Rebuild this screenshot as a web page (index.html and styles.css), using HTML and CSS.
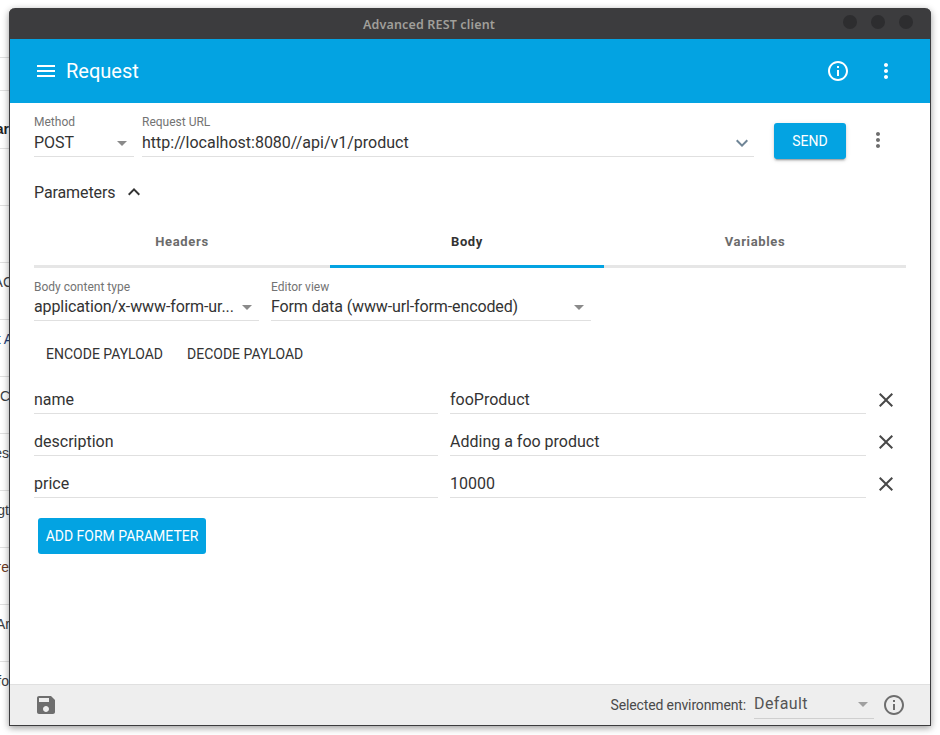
FILE: index.html
```html
<!DOCTYPE html>
<html lang="en">
<head>
<meta charset="utf-8">
<title>Advanced REST client</title>
<link rel="stylesheet" href="styles.css">
</head>
<body>
<div class="backdrop">
  <div class="bg-row bg-first"></div>
  <div class="bg-row bold">Bar</div>
  <div class="bg-row"></div>
  <div class="bg-row"></div>
  <div class="bg-row wide">AC</div>
  <div class="bg-row link wide">Get A</div>
  <div class="bg-row wide">C</div>
  <div class="bg-row">Ces</div>
  <div class="bg-row">Lengt</div>
  <div class="bg-row rust">Pre</div>
  <div class="bg-row wide-1">Ar</div>
  <div class="bg-row">Ifo</div>
</div>
<main class="window">
  <div class="titlebar">
    <span class="title">Advanced REST client</span>
    <div class="win-dots"><i></i><i></i><i></i></div>
  </div>
  <header class="appbar">
    <svg class="icon white menu-icon" viewBox="0 0 24 24"><path d="M3 18h18v-2H3v2zm0-5h18v-2H3v2zm0-7v2h18V6H3z"/></svg>
    <h1 class="appbar-title">Request</h1>
    <svg class="icon white info-icon" viewBox="0 0 24 24"><path d="M11 7h2v2h-2zm0 4h2v6h-2zm1-9C6.48 2 2 6.48 2 12s4.48 10 10 10 10-4.48 10-10S17.520 2 12 2zm0 18c-4.410 0-8-3.590-8-8s3.590-8 8-8 8 3.590 8 8-3.590 8-8 8z"/></svg>
    <svg class="icon white more-icon" viewBox="0 0 24 24"><path d="M12 8c1.100 0 2-.9 2-2s-.9-2-2-2-2 .9-2 2 .9 2 2 2zm0 2c-1.100 0-2 .9-2 2s.9 2 2 2 2-.9 2-2-.9-2-2-2zm0 6c-1.100 0-2 .9-2 2s.9 2 2 2 2-.9 2-2-.9-2-2-2z"/></svg>
  </header>
  <section class="content">
    <div class="url-row">
      <div class="field method">
        <label class="label">Method</label>
        <div class="value">POST<span class="caret"></span></div>
      </div>
      <div class="field url">
        <label class="label">Request URL</label>
        <div class="value">http://localhost:8080//api/v1/product
          <svg class="icon chevron" viewBox="0 0 24 24"><path d="M7.410 8.590L12 13.170l4.590-4.580L18 10l-6 6-6-6 1.410-1.410z"/></svg>
        </div>
      </div>
      <button class="btn send">SEND</button>
      <svg class="icon grey url-more" viewBox="0 0 24 24"><path d="M12 8c1.100 0 2-.9 2-2s-.9-2-2-2-2 .9-2 2 .9 2 2 2zm0 2c-1.100 0-2 .9-2 2s.9 2 2 2 2-.9 2-2-.9-2-2-2zm0 6c-1.100 0-2 .9-2 2s.9 2 2 2 2-.9 2-2-.9-2-2-2z"/></svg>
    </div>
    <div class="params-toggle">
      <span>Parameters</span>
      <svg class="icon dark up-icon" viewBox="0 0 24 24"><path d="M12 8l-6 6 1.410 1.410L12 10.830l4.590 4.580L18 14z"/></svg>
    </div>
    <div class="tabs">
      <div class="tab">Headers</div>
      <div class="tab active">Body</div>
      <div class="tab">Variables</div>
    </div>
    <div class="editor-row">
      <div class="field type">
        <label class="label">Body content type</label>
        <div class="value">application/x-www-form-ur...<span class="caret"></span></div>
      </div>
      <div class="field view">
        <label class="label">Editor view</label>
        <div class="value">Form data (www-url-form-encoded)<span class="caret"></span></div>
      </div>
    </div>
    <div class="actions">
      <button class="btn flat">ENCODE PAYLOAD</button>
      <button class="btn flat">DECODE PAYLOAD</button>
    </div>
    <div class="form-rows">
      <div class="form-row">
        <div class="cell">name</div><div class="cell">fooProduct</div>
        <svg class="icon close" viewBox="0 0 24 24"><path d="M19 6.410L17.590 5 12 10.590 6.410 5 5 6.410 10.590 12 5 17.590 6.410 19 12 13.410 17.590 19 19 17.590 13.410 12z"/></svg>
      </div>
      <div class="form-row">
        <div class="cell">description</div><div class="cell">Adding a foo product</div>
        <svg class="icon close" viewBox="0 0 24 24"><path d="M19 6.410L17.590 5 12 10.590 6.410 5 5 6.410 10.590 12 5 17.590 6.410 19 12 13.410 17.590 19 19 17.590 13.410 12z"/></svg>
      </div>
      <div class="form-row">
        <div class="cell">price</div><div class="cell">10000</div>
        <svg class="icon close" viewBox="0 0 24 24"><path d="M19 6.410L17.590 5 12 10.590 6.410 5 5 6.410 10.590 12 5 17.590 6.410 19 12 13.410 17.590 19 19 17.590 13.410 12z"/></svg>
      </div>
    </div>
    <button class="btn add">ADD FORM PARAMETER</button>
  </section>
  <footer class="statusbar">
    <svg class="icon grey save-icon" viewBox="0 0 24 24"><path d="M17 3H5c-1.110 0-2 .9-2 2v14c0 1.100.89 2 2 2h14c1.100 0 2-.9 2-2V7l-4-4zm-5 16c-1.660 0-3-1.340-3-3s1.340-3 3-3 3 1.340 3 3-1.340 3-3 3zm3-10H5V5h10v4z"/></svg>
    <span class="env-label">Selected environment:</span>
    <div class="env-select">Default<span class="caret"></span></div>
    <svg class="icon grey env-info" viewBox="0 0 24 24"><path d="M11 7h2v2h-2zm0 4h2v6h-2zm1-9C6.48 2 2 6.48 2 12s4.48 10 10 10 10-4.48 10-10S17.520 2 12 2zm0 18c-4.410 0-8-3.590-8-8s3.590-8 8-8 8 3.590 8 8-3.590 8-8 8z"/></svg>
  </footer>
</main>
</body>
</html>
```

FILE: styles.css
```css
* { box-sizing: border-box; }
html, body { height: 100%; }
body {
  margin: 0;
  background: #fff;
  overflow: hidden;
  font-family: Roboto, "Liberation Sans", sans-serif;
  color: #333;
}

/* page glimpsed behind the window */
.backdrop {
  padding-top: 57px;
  font: 14px "Liberation Sans", sans-serif;
  color: #3c4043;
}
.bg-row {
  height: 57px;
  width: 9px;
  border-top: 1px solid #e0e0e0;
  padding-top: 9px;
  line-height: 20px;
  white-space: nowrap;
  overflow: hidden;
  direction: rtl;
  text-align: left;
}
.wide { width: 13px; }
.wide-1 { width: 10px; }
.bg-first { height: 33px; padding: 0; }
.bold { height: 58px; padding-top: 28px; font-weight: 700; color: #222; }
.link { color: #1f3f7a; }
.rust { color: #6b3a24; }

/* window */
.window {
  position: absolute;
  left: 9px;
  top: 8px;
  width: 922px;
  height: 718px;
  display: flex;
  flex-direction: column;
  background: #fff;
  border: 1px solid #3c3c3e;
  border-top: 0;
  border-radius: 6px 6px 0 0;
  box-shadow: 0 2px 7px rgba(0,0,0,.4);
}
.titlebar {
  height: 31px;
  margin: 0 -1px;
  padding: 1px 82px 0 0;
  background: #3c3c3e;
  border-radius: 6px 6px 0 0;
  display: flex;
  align-items: center;
  justify-content: center;
  position: relative;
}
.title {
  font: 600 12.500px "Noto Sans", sans-serif;
  color: #a09f9a;
  letter-spacing: 0.15px;
}
.win-dots {
  position: absolute;
  right: 18px;
  top: 7px;
  display: flex;
  gap: 14px;
}
.win-dots i {
  width: 14px;
  height: 14px;
  border-radius: 50%;
  background: #2d2d2f;
}

.appbar {
  height: 64px;
  flex: none;
  background: #03a3e2;
  display: flex;
  align-items: center;
  padding: 0 32px 0 24px;
}
.appbar-title {
  margin: 0 0 0 8px;
  flex: 1;
  font-size: 20px;
  font-weight: 400;
  color: #fff;
}
.icon { width: 24px; height: 24px; flex: none; fill: #333; display: block; }
.icon.white { fill: #fff; }
.icon.grey { fill: #6e6e6e; }
.icon.dark { fill: #333; }
.more-icon { margin-left: 24px; }

.content {
  flex: 1;
  padding: 12px 24px 0;
  min-height: 0;
}
.label {
  display: block;
  font-size: 12px;
  line-height: 14px;
  color: #737373;
}
.value {
  position: relative;
  font-size: 16px;
  line-height: 24px;
  height: 27px;
  padding-top: 1px;
  color: #333;
  border-bottom: 1px solid #e0e0e0;
  white-space: nowrap;
}
.caret {
  position: absolute;
  right: 7px;
  top: 11px;
  width: 0;
  height: 0;
  border: 5px solid transparent;
  border-top: 5px solid #8a8a8a;
  border-bottom: 0;
}

.url-row { display: flex; align-items: flex-start; height: 44px; }
.url-row .value { height: 28px; padding-top: 2px; }
.url-row .caret { top: 12px; }
.method { width: 100px; margin-right: 8px; }
.url { width: 612px; margin-right: 20px; }
.chevron { position: absolute; right: 0; top: 2px; fill: #6f8596; }
.btn {
  font-family: Roboto, "Liberation Sans", sans-serif;
  font-size: 14px;
  border: 0;
  border-radius: 3px;
  background: none;
  padding: 0;
  color: #333;
}
.send {
  width: 72px;
  height: 36px;
  margin-top: 8px;
  background: #03a3e2;
  color: #fff;
  box-shadow: 0 2px 2px rgba(0,0,0,.14), 0 1px 5px rgba(0,0,0,.12), 0 3px 1px -2px rgba(0,0,0,.2);
}
.url-more { margin: 13px 0 0 20px; }

.params-toggle {
  display: flex;
  align-items: center;
  height: 24px;
  margin-top: 21px;
  font-size: 16px;
  letter-spacing: -0.1px;
  color: #333;
}
.up-icon { margin-left: 8px; margin-right: 0; transform: translateX(-1px); }

.tabs {
  display: grid;
  grid-template-columns: 296px 274px 302px;
  margin-top: 14px;
  height: 50px;
  border-bottom: 3px solid #e6e6e6;
}
.tab {
  text-align: center;
  font-size: 13px;
  font-weight: 700;
  letter-spacing: 0.65px;
  line-height: 48px;
  height: 50px;
  color: #6b6b6b;
}
.tab.active { color: #333; border-bottom: 3px solid #03a3e2; }

.editor-row { display: flex; gap: 12px; margin-top: 12px; }
.type { width: 225px; }
.type .value { letter-spacing: -0.1px; }
.view { width: 320px; }
.view .value { letter-spacing: -0.12px; }

.actions { display: flex; margin-top: 15px; height: 36px; }
.flat { padding: 0 12px; height: 36px; line-height: 36px; }

.form-rows { margin-top: 5px; }
.form-row {
  display: grid;
  grid-template-columns: 404px 416px 24px;
  column-gap: 12px;
  height: 42px;
  padding-top: 9px;
}
.cell {
  height: 28px;
  font-size: 16px;
  line-height: 24px;
  padding-top: 2px;
  color: #333;
  border-bottom: 1px solid #e0e0e0;
}
.close { margin: 2px 0 0 -4px; fill: #484848; }

.add {
  display: block;
  width: 168px;
  height: 36px;
  margin: 15px 0 0 4px;
  background: #03a3e2;
  color: #fff;
}

.statusbar {
  height: 41px;
  flex: none;
  background: #eeeeee;
  border-top: 1px solid #e0e0e0;
  display: flex;
  align-items: center;
  padding: 0 24px;
}
.save-icon { margin-right: auto; }
.env-label { font-size: 14px; letter-spacing: -0.14px; color: #4a4a4a; margin-right: 8px; }
.env-select {
  position: relative;
  width: 120px;
  height: 28px;
  padding-top: 1px;
  font-size: 16px;
  line-height: 24px;
  letter-spacing: 0.4px;
  color: #555;
  border-bottom: 1px solid #cfcfcf;
}
.env-select .caret { right: 6px; top: 11px; border-top-color: #a0a0a0; }
.env-info { margin-left: 8px; }
```
